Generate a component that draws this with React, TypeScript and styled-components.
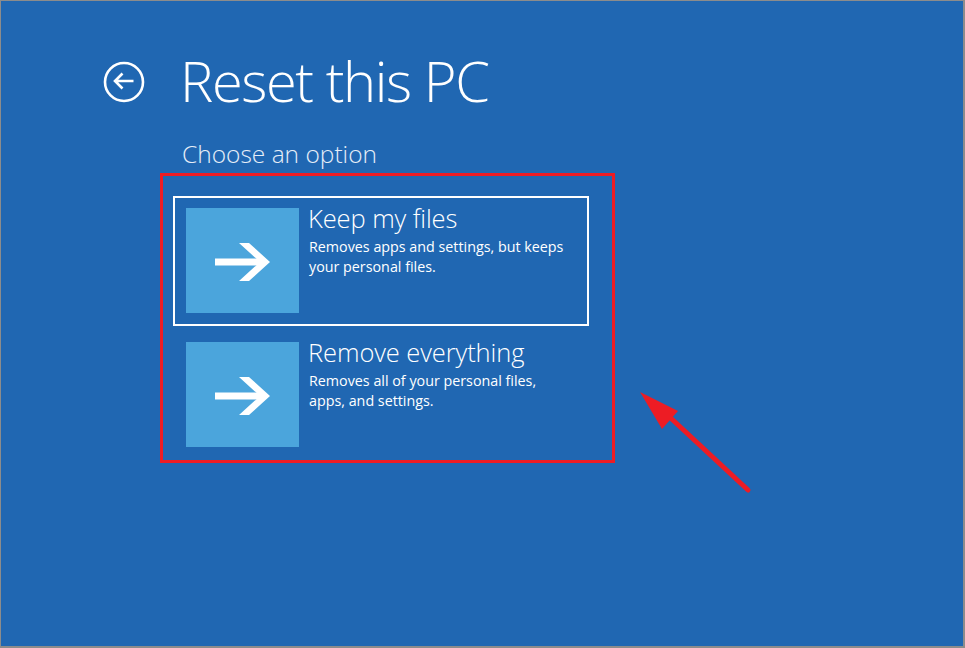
import React from 'react'
import styled, { createGlobalStyle } from 'styled-components'

const GlobalStyle = createGlobalStyle`
  html, body {
    margin: 0;
    padding: 0;
    background: #2067b2;
  }
  * {
    box-sizing: border-box;
  }
`

const Screen = styled.div`
  position: relative;
  width: 965px;
  height: 648px;
  background: #2067b2;
  border: 1px solid #8c8c8c;
  border-right-width: 2px;
  border-bottom-width: 2px;
  font-family: 'Open Sans', 'Noto Sans', sans-serif;
  color: #ffffff;
  overflow: hidden;
`

const Header = styled.header`
  display: flex;
  align-items: center;
  gap: 35px;
  padding: 43px 0 0 102px;
`

const BackButton = styled.button`
  width: 42px;
  height: 42px;
  padding: 0;
  border: none;
  background: transparent;
  display: flex;
  align-items: center;
  justify-content: center;
  margin-top: 3px;
`

const Title = styled.h1`
  margin: 0;
  font-size: 56px;
  font-weight: 300;
  line-height: 72px;
  letter-spacing: -1.4px;
`

const Body = styled.div`
  padding-left: 159px;
`

const Subtitle = styled.h2`
  margin: 23px 0 0 22px;
  font-size: 24.5px;
  font-weight: 300;
  line-height: 30px;
  color: #e6eef8;
`

const Highlight = styled.div`
  width: 455px;
  height: 290px;
  margin-top: 4px;
  border: 3px solid #ed1c24;
  padding: 20px 0 0 10px;
  display: flex;
  flex-direction: column;
  gap: 4px;
`

const Option = styled.div<{ $selected?: boolean }>`
  width: 416px;
  height: 130px;
  border: 2px solid ${(p) => (p.$selected ? '#ffffff' : 'transparent')};
  padding: 10px 0 0 11px;
  display: flex;
  gap: 9px;
`

const Tile = styled.div`
  width: 113px;
  height: 105px;
  flex-shrink: 0;
  background: #4ba5dc;
  display: flex;
  align-items: center;
  justify-content: center;
`

const OptionText = styled.div`
  display: flex;
  flex-direction: column;
`

const OptionTitle = styled.div`
  font-size: 25.5px;
  font-weight: 300;
  line-height: 30px;
  margin-top: -5px;
  letter-spacing: -0.1px;
`

const OptionDesc = styled.div`
  font-size: 14.3px;
  line-height: 20px;
  margin-top: 4px;
  margin-left: 1px;
  width: 258px;
`

const Pointer = styled.svg`
  position: absolute;
  left: 0;
  top: 0;
  pointer-events: none;
`

const BackIcon = () => (
  <svg width="42" height="42" viewBox="0 0 42 42">
    <circle cx="21" cy="21" r="19" fill="none" stroke="#fff" strokeWidth="2.6" />
    <path
      d="M30.5 20H12.5M19.5 12.5L12 20L19.5 27.5"
      fill="none"
      stroke="#fff"
      strokeWidth="2.6"
    />
  </svg>
)

const TileArrow = () => (
  <svg width="56" height="38" viewBox="0 0 56 38" style={{ marginTop: 2 }}>
    <path d="M0 15.5H46V22.5H0Z" fill="#fff" />
    <path d="M24 0H34L55 19L34 38H24L45 19Z" fill="#fff" />
  </svg>
)

const options = [
  {
    title: 'Keep my files',
    desc: 'Removes apps and settings, but keeps your personal files.',
    selected: true,
  },
  {
    title: 'Remove everything',
    desc: 'Removes all of your personal files, apps, and settings.',
    selected: false,
  },
]

const App: React.FC = () => {
  return (
    <>
      <GlobalStyle />
      <Screen>
        <Header>
          <BackButton aria-label="Back">
            <BackIcon />
          </BackButton>
          <Title>Reset this PC</Title>
        </Header>

        <Body>
          <Subtitle>Choose an option</Subtitle>
          <Highlight>
            {options.map((o) => (
              <Option key={o.title} $selected={o.selected}>
                <Tile>
                  <TileArrow />
                </Tile>
                <OptionText>
                  <OptionTitle>{o.title}</OptionTitle>
                  <OptionDesc>{o.desc}</OptionDesc>
                </OptionText>
              </Option>
            ))}
          </Highlight>
        </Body>

        <Pointer width="965" height="648" viewBox="0 0 965 648">
          <line x1="747" y1="489" x2="660" y2="408" stroke="#ed1c24" strokeWidth="5" strokeLinecap="round" />
          <polygon points="639,391 677,410 661,428" fill="#ed1c24" />
        </Pointer>
      </Screen>
    </>
  )
}

export default App
